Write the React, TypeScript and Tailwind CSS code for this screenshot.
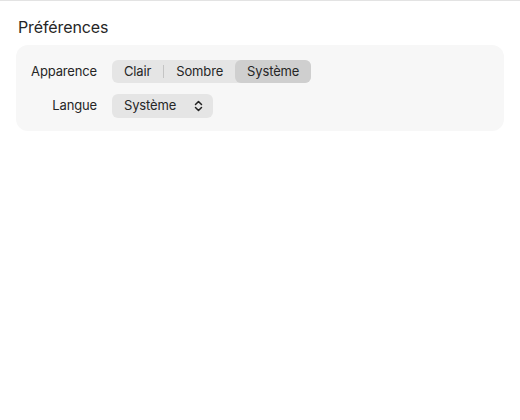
import { useState } from "react";

const themes = ["Clair", "Sombre", "Système"];

function Segmented({ value, onChange }: { value: string; onChange: (v: string) => void }) {
  return (
    <div className="flex h-[23px] items-stretch rounded-[6px] bg-[#e5e5e5]">
      {themes.map((t, i) => {
        const active = t === value;
        const nextActive = themes[i + 1] === value;
        const showDivider = i < themes.length - 1 && !active && !nextActive;
        return (
          <div key={t} className="flex items-center">
            <button
              onClick={() => onChange(t)}
              className={
                active
                  ? "flex h-full items-center rounded-[6px] bg-[#cfcfcf] px-3 text-[13px] tracking-[-0.15px] text-[#262626]"
                  : "flex h-full items-center px-3 text-[13px] tracking-[-0.15px] text-[#262626]"
              }
            >
              {t}
            </button>
            {showDivider && <span className="h-[13px] w-px bg-[#c4c4c4]" />}
          </div>
        );
      })}
    </div>
  );
}

function ChevronUpDown() {
  return (
    <svg width="9" height="12" viewBox="0 0 9 12" fill="none" stroke="#222" strokeWidth="1.5" strokeLinecap="round" strokeLinejoin="round">
      <path d="M1.5 4.5 L4.5 1.5 L7.5 4.5" />
      <path d="M1.5 7.5 L4.5 10.5 L7.5 7.5" />
    </svg>
  );
}

export default function App() {
  const [theme, setTheme] = useState("Système");

  return (
    <div className="h-[420px] w-[520px] border-t border-[#e3e3e3] bg-white font-['Inter',sans-serif] text-[#262626]">
      <div className="px-4 pt-[16px]">
        <h1 className="ml-[2px] text-[16px] leading-5 tracking-[-0.1px]">Préférences</h1>
        <div className="mt-[8px] grid grid-cols-[81px_1fr] items-center gap-x-[15px] gap-y-[11px] rounded-[12px] bg-[#f7f7f7] pt-[15px] pb-[13px]">
          <span className="text-right text-[13px] tracking-[-0.15px]">Apparence</span>
          <div className="flex">
            <Segmented value={theme} onChange={setTheme} />
          </div>
          <span className="text-right text-[13px] tracking-[-0.15px]">Langue</span>
          <div className="flex">
            <button className="flex h-[24px] w-[101px] items-center justify-between rounded-[6px] bg-[#e5e5e5] pl-3 pr-[10px] text-[13px] tracking-[-0.15px]">
              <span>Système</span>
              <ChevronUpDown />
            </button>
          </div>
        </div>
      </div>
    </div>
  );
}
